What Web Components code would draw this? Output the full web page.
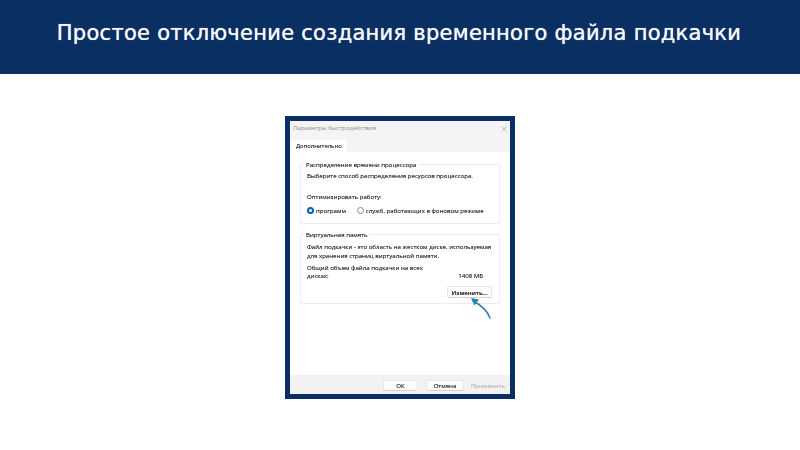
<!DOCTYPE html>
<html lang="ru">
<head>
<meta charset="utf-8">
<title>Простое отключение создания временного файла подкачки</title>
<style>
    html, body { margin: 0; padding: 0; background: #fff; }
    body { width: 800px; height: 450px; overflow: hidden; font-family: "DejaVu Sans", sans-serif; }
</style>
</head>
<body>
<slide-page>
    <span slot="title">Простое отключение создания временного файла подкачки</span>
    <perf-dialog></perf-dialog>
</slide-page>

<script>
/* Slide: title bar + centered picture */
class SlidePage extends HTMLElement {
    constructor() {
        super()
        this.attachShadow({ mode: 'open' })
        this.shadowRoot.innerHTML = `
        <style>
        :host { display: flex; flex-direction: column; width: 800px; height: 450px; }
        header {
            box-sizing: border-box;
            height: 74px;
            background: #0a2f62;
            color: #f4f8fb;
            display: flex;
            align-items: center;
            justify-content: center;
            padding: 0 2px 8px 0;
            font: 21px "DejaVu Sans", sans-serif;
            letter-spacing: 0.27px;
            white-space: nowrap;
            text-shadow: 0 0 .7px #f4f8fb;
        }
        main { display: flex; justify-content: center; padding-top: 42px; }
        </style>
        <header><slot name="title"></slot></header>
        <main><slot></slot></main>
        `
    }
}
customElements.define('slide-page', SlidePage)

/* Group box with legend on the top border */
class GroupBox extends HTMLElement {
    constructor() {
        super()
        this.attachShadow({ mode: 'open' })
        this.shadowRoot.innerHTML = `
        <style>
        :host {
            display: block;
            position: relative;
            box-sizing: border-box;
            border: 1px solid #ececec;
            border-radius: 2px;
            padding: 6px 6px 0 6px;
        }
        .legend {
            position: absolute;
            left: 3px;
            top: -5px;
            padding: 0 2px;
            background: #fff;
            color: #333;
            line-height: 9px;
        }
        </style>
        <span class="legend">${this.getAttribute('legend') ?? ''}</span>
        <slot></slot>
        `
    }
}
customElements.define('group-box', GroupBox)

/* Small windows button */
class WinBtn extends HTMLElement {
    constructor() {
        super()
        this.attachShadow({ mode: 'open' })
        this.shadowRoot.innerHTML = `
        <style>
        :host {
            display: flex;
            align-items: center;
            justify-content: center;
            box-sizing: border-box;
            height: 12px;
            background: #fdfdfd;
            border: 1px solid #e6e6e6;
            border-bottom-color: #d2d2d2;
            border-radius: 2px;
            color: #333;
        }
        :host([disabled]) { background: transparent; border-color: transparent; color: #a2a2a2; text-shadow: none; }
        </style>
        <slot></slot>
        `
    }
}
customElements.define('win-btn', WinBtn)

/* Radio with label */
class WinRadio extends HTMLElement {
    constructor() {
        super()
        this.attachShadow({ mode: 'open' })
        const on = this.hasAttribute('checked')
        this.shadowRoot.innerHTML = `
        <style>
        :host { display: inline-flex; align-items: center; gap: 2px; color: #333; }
        i { box-sizing: border-box; width: 7px; height: 7px; border-radius: 50%; }
        i.on { background: #fff; border: 2px solid #0a62a8; }
        i.off { border: 1px solid #8a8a8a; }
        </style>
        <i class="${on ? 'on' : 'off'}"></i><slot></slot>
        `
    }
}
customElements.define('win-radio', WinRadio)

/* The performance options dialog */
class PerfDialog extends HTMLElement {
    constructor() {
        super()
        this.attachShadow({ mode: 'open' })
        this.shadowRoot.innerHTML = `
        <style>
        :host {
            display: block;
            box-sizing: border-box;
            width: 230px;
            height: 283px;
            border: 5px solid #0a2f62;
            background: #fff;
            font: 6.1px/9px "Open Sans", sans-serif;
            color: #333;
            text-shadow: 0 0 .4px rgba(40,40,40,.7);
        }
        .win { position: relative; display: flex; flex-direction: column; height: 100%; filter: blur(0.45px); }
        .head { background: #f4f4f4; height: 31px; flex: none; display: flex; flex-direction: column; }
        .caption { display: flex; justify-content: space-between; padding: 3px 3px 0 3px; height: 15px; box-sizing: border-box; color: #8d8d8d; text-shadow: none; }
        .caption span { font-size: 6px; }
        .caption svg { width: 6px; height: 6px; margin-top: 2px; }
        .tabs { display: flex; margin-top: 4px; padding-left: 1px; }
        .tab { background: #fff; height: 12px; padding: 2px 5px 0; box-sizing: border-box; color: #333; font-size: 5.9px; }
        .body { flex: 1; padding: 12px 10px 0; display: flex; flex-direction: column; gap: 10px; }
        .g1 { height: 60px; }
        .g2 { height: 70px; padding-top: 7px; }
        .sub { margin-top: 12px; }
        .radios { display: flex; gap: 11px; margin-top: 5px; }
        .tot { display: flex; justify-content: space-between; align-items: flex-end; margin-top: 4px; padding-right: 10px; line-height: 7.5px; }
        .tot span:first-child { width: 130px; }
        .row-btn { display: flex; justify-content: flex-end; margin-top: 7px; margin-right: 1px; }
        .row-btn win-btn { width: 45px; font-weight: 600; }
        .foot { flex: none; height: 19px; box-sizing: border-box; background: #f2f2f2; display: flex; justify-content: flex-end; gap: 8px; padding: 5px 6px 0 0; }
        .foot win-btn { height: 11px; }
        .arrow { position: absolute; left: 176px; top: 174px; width: 26px; height: 26px; }
        </style>
        <div class="win">
            <div class="head">
                <div class="caption">
                    <span>Параметры быстродействия</span>
                    <svg viewBox="0 0 6 6"><path d="M.5.5l5 5M5.5.5l-5 5" stroke="#a5a5a5" stroke-width=".7" fill="none"/></svg>
                </div>
                <div class="tabs"><div class="tab">Дополнительно</div></div>
            </div>
            <div class="body">
                <group-box class="g1" legend="Распределение времени процессора">
                    <div>Выберите способ распределения ресурсов процессора.</div>
                    <div class="sub">Оптимизировать работу:</div>
                    <div class="radios">
                        <win-radio checked>программ</win-radio>
                        <win-radio>служб, работающих в фоновом режиме</win-radio>
                    </div>
                </group-box>
                <group-box class="g2" legend="Виртуальная память">
                    <div>Файл подкачки - это область на жестком диске, используемая для хранения страниц виртуальной памяти.</div>
                    <div class="tot"><span>Общий объем файла подкачки на всех дисках:</span><span>1408 МБ</span></div>
                    <div class="row-btn"><win-btn>Изменить...</win-btn></div>
                </group-box>
            </div>
            <div class="foot">
                <win-btn style="width:35px">ОК</win-btn>
                <win-btn style="width:38px">Отмена</win-btn>
                <win-btn style="width:32px" disabled>Применить</win-btn>
            </div>
            <svg class="arrow" viewBox="0 0 26 26">
                <path d="M24 23C21 15 15 10 7 6" fill="none" stroke="#2f7fb0" stroke-width="1.5" stroke-linecap="round"/>
                <path d="M5 3l8 1.500-4.500 6z" fill="#2f7fb0"/>
            </svg>
        </div>
        `
    }
}
customElements.define('perf-dialog', PerfDialog)
</script>
</body>
</html>
